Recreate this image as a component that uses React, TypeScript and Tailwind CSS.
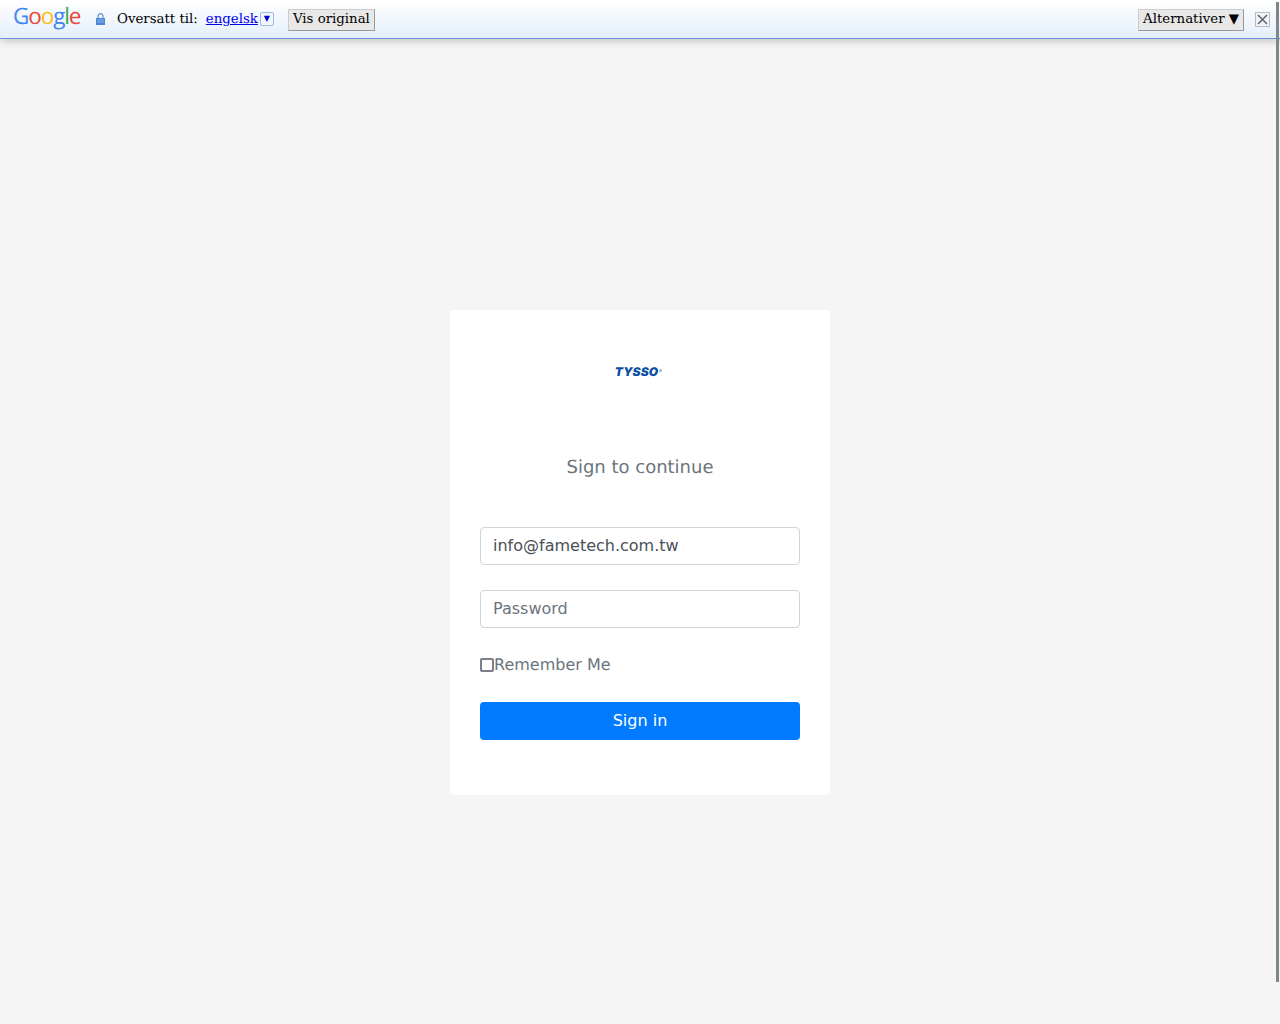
const serif = "font-['DejaVu_Serif',serif]";

function GoogleWord() {
  return (
    <span className="font-['Open_Sans',sans-serif] text-[22.5px] font-medium leading-none tracking-[-1.1px]">
      <span className="text-[#4285f4]">G</span>
      <span className="text-[#ea4335]">o</span>
      <span className="text-[#fbbc05]">o</span>
      <span className="text-[#4285f4]">g</span>
      <span className="text-[#34a853]">l</span>
      <span className="text-[#ea4335]">e</span>
    </span>
  );
}

function Lock() {
  return (
    <svg width="9" height="12" viewBox="0 0 9 12" className="block">
      <path d="M2 6V3.2a2.5 2.5 0 0 1 5 0V6" fill="none" stroke="#5b8fd9" strokeWidth="1.2" />
      <rect x="0" y="5" width="9" height="7" rx="0.5" fill="#4a86d8" />
      <path d="M1 7h7M1 9h7" stroke="#a9c8ef" strokeWidth="0.7" />
    </svg>
  );
}

function BarButton({ children }: { children: React.ReactNode }) {
  return (
    <button className="h-[22px] border border-[#ccc] border-r-[#999] border-b-[#999] bg-[#e8e8e8] px-1 pb-[2px] text-[13.33px] leading-[18px] text-black">
      {children}
    </button>
  );
}

function TranslateBar() {
  return (
    <div className={`${serif} relative flex h-[39px] items-center border-b border-[#6b90da] bg-gradient-to-b from-white to-[#e4effb] shadow-[0_2px_8px_rgba(0,0,0,0.2)]`}>
      <div className="ml-[13px] w-[69px] pb-[2px]"><GoogleWord /></div>
      <div className="ml-[14px]"><Lock /></div>
      <span className="ml-[12px] pt-[2px] text-[13.33px] text-black">Oversatt til:</span>
      <a className="ml-[8px] pt-[2px] text-[13.33px] text-[#0000ee] underline">engelsk</a>
      <span className="ml-[2px] flex h-[14px] w-[14px] items-center justify-center rounded-[2px] border border-[#9dbde8] bg-[#f3f7fd] text-[8px] leading-none text-[#0000cc]">▼</span>
      <div className="ml-[14px] -translate-y-px"><BarButton>Vis original</BarButton></div>
      <div className="ml-auto -translate-y-px"><BarButton>Alternativer ▼</BarButton></div>
      <div className="ml-[11px] mr-[10px] flex h-[15px] w-[15px] items-center justify-center border border-[#bbb] bg-[#f0f4fa]">
        <svg width="11" height="11" viewBox="0 0 11 11"><path d="M1 1l9 9M10 1l-9 9" stroke="#666" strokeWidth="1.6" /></svg>
      </div>
    </div>
  );
}

export default function App() {
  return (
    <div className="relative min-h-[1024px] bg-[#f5f5f5] font-['DejaVu_Sans',sans-serif] [text-rendering:geometricPrecision]">
      <TranslateBar />
      {/* fake overlay scrollbar */}
      <div className="absolute right-[1px] top-[2px] h-[980px] w-[3px] bg-[#7f8688]" />

      <div className="flex justify-center pt-[271px]">
        <div className="flex h-[485px] w-[380px] flex-col rounded-[4px] bg-white px-[30px]">
          <div className="mt-[54px] flex h-[16px] items-center justify-center pr-[3px]">
            <span className="font-['Inter',sans-serif] text-[12px] font-black italic leading-none tracking-[0.1px] text-[#0b4ea2]">TYSSO</span>
            <span className="ml-[1px] mb-[3px] h-[3px] w-[3px] rounded-full bg-[#9db8d8]" />
          </div>

          <h2 className="mt-[74px] text-center text-[18px] leading-[27px] text-[#6c757d]">Sign to continue</h2>

          <input
            readOnly
            value="info@fametech.com.tw"
            className="mt-[46px] h-[38px] w-full rounded-[4px] border border-[#ced4da] bg-white px-3 pb-[2px] text-base text-[#495057] outline-none"
          />
          <input
            readOnly
            type="password"
            placeholder="Password"
            className="mt-[25px] h-[38px] w-full rounded-[4px] border border-[#ced4da] bg-white px-3 pb-[2px] text-base text-[#495057] outline-none placeholder:text-[#6c757d]"
          />

          <label className="mt-[25px] flex h-[24px] items-center text-base text-[#6c757d]">
            <input type="checkbox" className="mb-[1px] h-[14px] w-[14px] appearance-none rounded-[2px] border-2 border-[#7c7c8a] bg-white" />
            Remember Me
          </label>

          <button className="mt-[25px] h-[38px] w-full rounded-[4px] bg-[#007bff] text-base text-white">Sign in</button>
        </div>
      </div>
    </div>
  );
}
